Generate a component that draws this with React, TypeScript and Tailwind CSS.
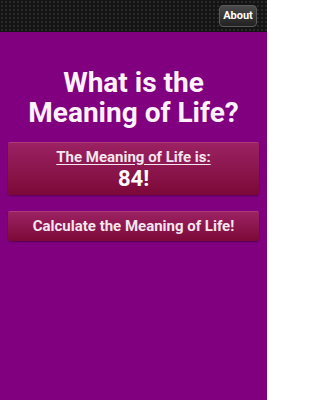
export default function App() {
  return (
    <div className="flex h-[400px] w-[267px] flex-col overflow-hidden bg-[#800080] font-['Roboto',sans-serif] text-white">
      <div className="flex h-[32px] items-center justify-end bg-[#141414] bg-[radial-gradient(#2a2a2a_1px,transparent_1.5px)] bg-[length:4px_4px] pr-[10px]">
        <button className="h-[22px] w-[38px] rounded-[4px] border border-[#5a5a5a] bg-gradient-to-b from-[#4a4a4a] to-[#222] text-[11px] font-bold text-white">
          About
        </button>
      </div>
      <h1 className="mt-[36px] text-center text-[28px] leading-[30px] font-bold text-[#fdf2fb]">
        What is the
        <br />
        Meaning of Life?
      </h1>
      <div className="mx-[8px] mt-[14px] flex h-[53px] flex-col items-center justify-center rounded-[2px] border-t border-[#b03a78] bg-gradient-to-b from-[#9b2163] to-[#7c0838] shadow-[0_1px_2px_rgba(0,0,0,0.35)]">
        <p className="text-[15px] leading-[18px] font-bold text-[#f3e6ee] underline underline-offset-2">
          The Meaning of Life is:
        </p>
        <p className="text-[22px] leading-[25px] font-bold text-white">84!</p>
      </div>
      <button className="mx-[8px] mt-[16px] h-[30px] rounded-[2px] border-t border-[#b03a78] bg-gradient-to-b from-[#9b2163] to-[#7c0838] text-[15px] font-bold text-[#f3e6ee] shadow-[0_1px_2px_rgba(0,0,0,0.35)]">
        Calculate the Meaning of Life!
      </button>
    </div>
  );
}
